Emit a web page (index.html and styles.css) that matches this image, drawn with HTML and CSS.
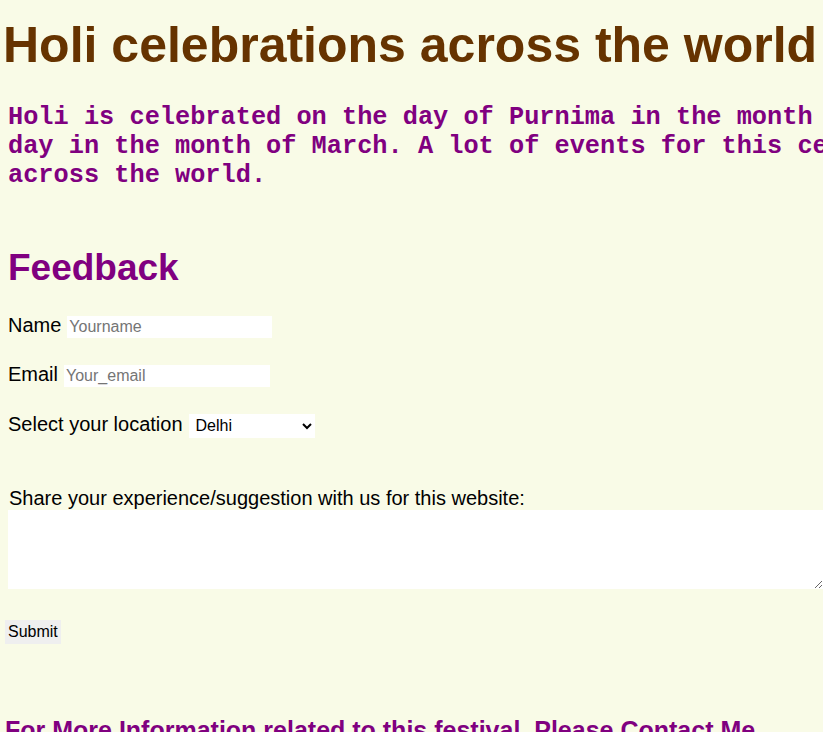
FILE: index.html
```html
<!DOCTYPE html>
<html lang="en">
<head>
<meta charset="utf-8">
<title>Holi celebrations across the world</title>
<link rel="stylesheet" href="styles.css">
</head>
<body>
<h1 class="title">Holi celebrations across the world</h1>
<p class="intro">Holi is celebrated on the day of Purnima in the month of Phalguna, usually a day in the month of March. A lot of events for this celebration are organised across the world.</p>

<section class="feedback">
  <h2 class="feedback-title">Feedback</h2>
  <form class="feedback-form">
    <div class="field">
      <label class="field-label" for="name">Name</label>
      <input class="text-input name-input" id="name" type="text" placeholder="Yourname">
    </div>
    <div class="field">
      <label class="field-label" for="email">Email</label>
      <input class="text-input email-input" id="email" type="email" placeholder="Your_email">
    </div>
    <div class="field">
      <label class="field-label" for="location">Select your location</label>
      <select class="location-select" id="location">
        <option>Delhi</option>
        <option>Mumbai</option>
        <option>Kolkata</option>
        <option>Chennai</option>
      </select>
    </div>
    <div class="message">
      <label class="message-label" for="message">Share your experience/suggestion with us for this website:</label>
      <textarea class="message-input" id="message"></textarea>
    </div>
    <button class="submit-btn" type="submit">Submit</button>
  </form>
</section>

<h3 class="contact">For More Information related to this festival, Please Contact Me</h3>
</body>
</html>
```

FILE: styles.css
```css
html {
  background: #f9fbe7;
}

body {
  margin: 0;
  padding: 0 8px;
  background: #f9fbe7;
  font-family: "Liberation Sans", Arial, sans-serif;
  color: #000;
}

.title {
  margin: 17px 0 0 -5px;
  font-size: 50px;
  line-height: 57px;
  font-weight: bold;
  color: #663300;
  white-space: nowrap;
}

.intro {
  margin: 29px 0 0 0;
  width: 78ch;
  font-family: "Liberation Mono", "Courier New", monospace;
  font-weight: bold;
  font-size: 25.3px;
  line-height: 29px;
  color: #800080;
}

.feedback-title {
  margin: 57px 0 0 0;
  font-size: 37px;
  line-height: 42px;
  font-weight: bold;
  color: #800080;
}

.feedback-form {
  margin-top: 25px;
}

.field {
  display: flex;
  align-items: baseline;
  gap: 6px;
  margin-bottom: 26px;
  font-size: 20px;
  line-height: 23px;
}

.field:first-child {
  margin-bottom: 25px;
}

.text-input {
  box-sizing: border-box;
  height: 22px;
  padding: 1px 2px;
  border: none;
  background: #fff;
  font-family: "Liberation Sans", Arial, sans-serif;
  font-size: 16px;
  color: #000;
  outline: none;
}

.text-input::placeholder {
  color: #757575;
}

.name-input {
  width: 205px;
}

.email-input {
  width: 206px;
}

.location-select {
  box-sizing: border-box;
  width: 126px;
  height: 24px;
  padding: 0 2px 0 3px;
  border: none;
  background: #fff;
  font-family: "Liberation Sans", Arial, sans-serif;
  font-size: 16px;
  color: #000;
  border-radius: 0;
}

.message {
  margin-top: 49px;
}

.message-label {
  display: block;
  padding-left: 1px;
  font-size: 20px;
  line-height: 23px;
}

.message-input {
  display: block;
  box-sizing: border-box;
  width: 815px;
  height: 79px;
  margin: 0;
  border: none;
  background: #fff;
  font-family: "Liberation Mono", monospace;
}

.submit-btn {
  display: block;
  margin: 31px 0 0 -3px;
  height: 24px;
  padding: 1px 3px;
  border: none;
  background: #efefef;
  font-family: "Liberation Sans", Arial, sans-serif;
  font-size: 16px;
  color: #000;
}

.contact {
  margin: 72px 0 0 -3px;
  font-size: 25px;
  line-height: 29px;
  font-weight: bold;
  color: #800080;
  white-space: nowrap;
}
```
